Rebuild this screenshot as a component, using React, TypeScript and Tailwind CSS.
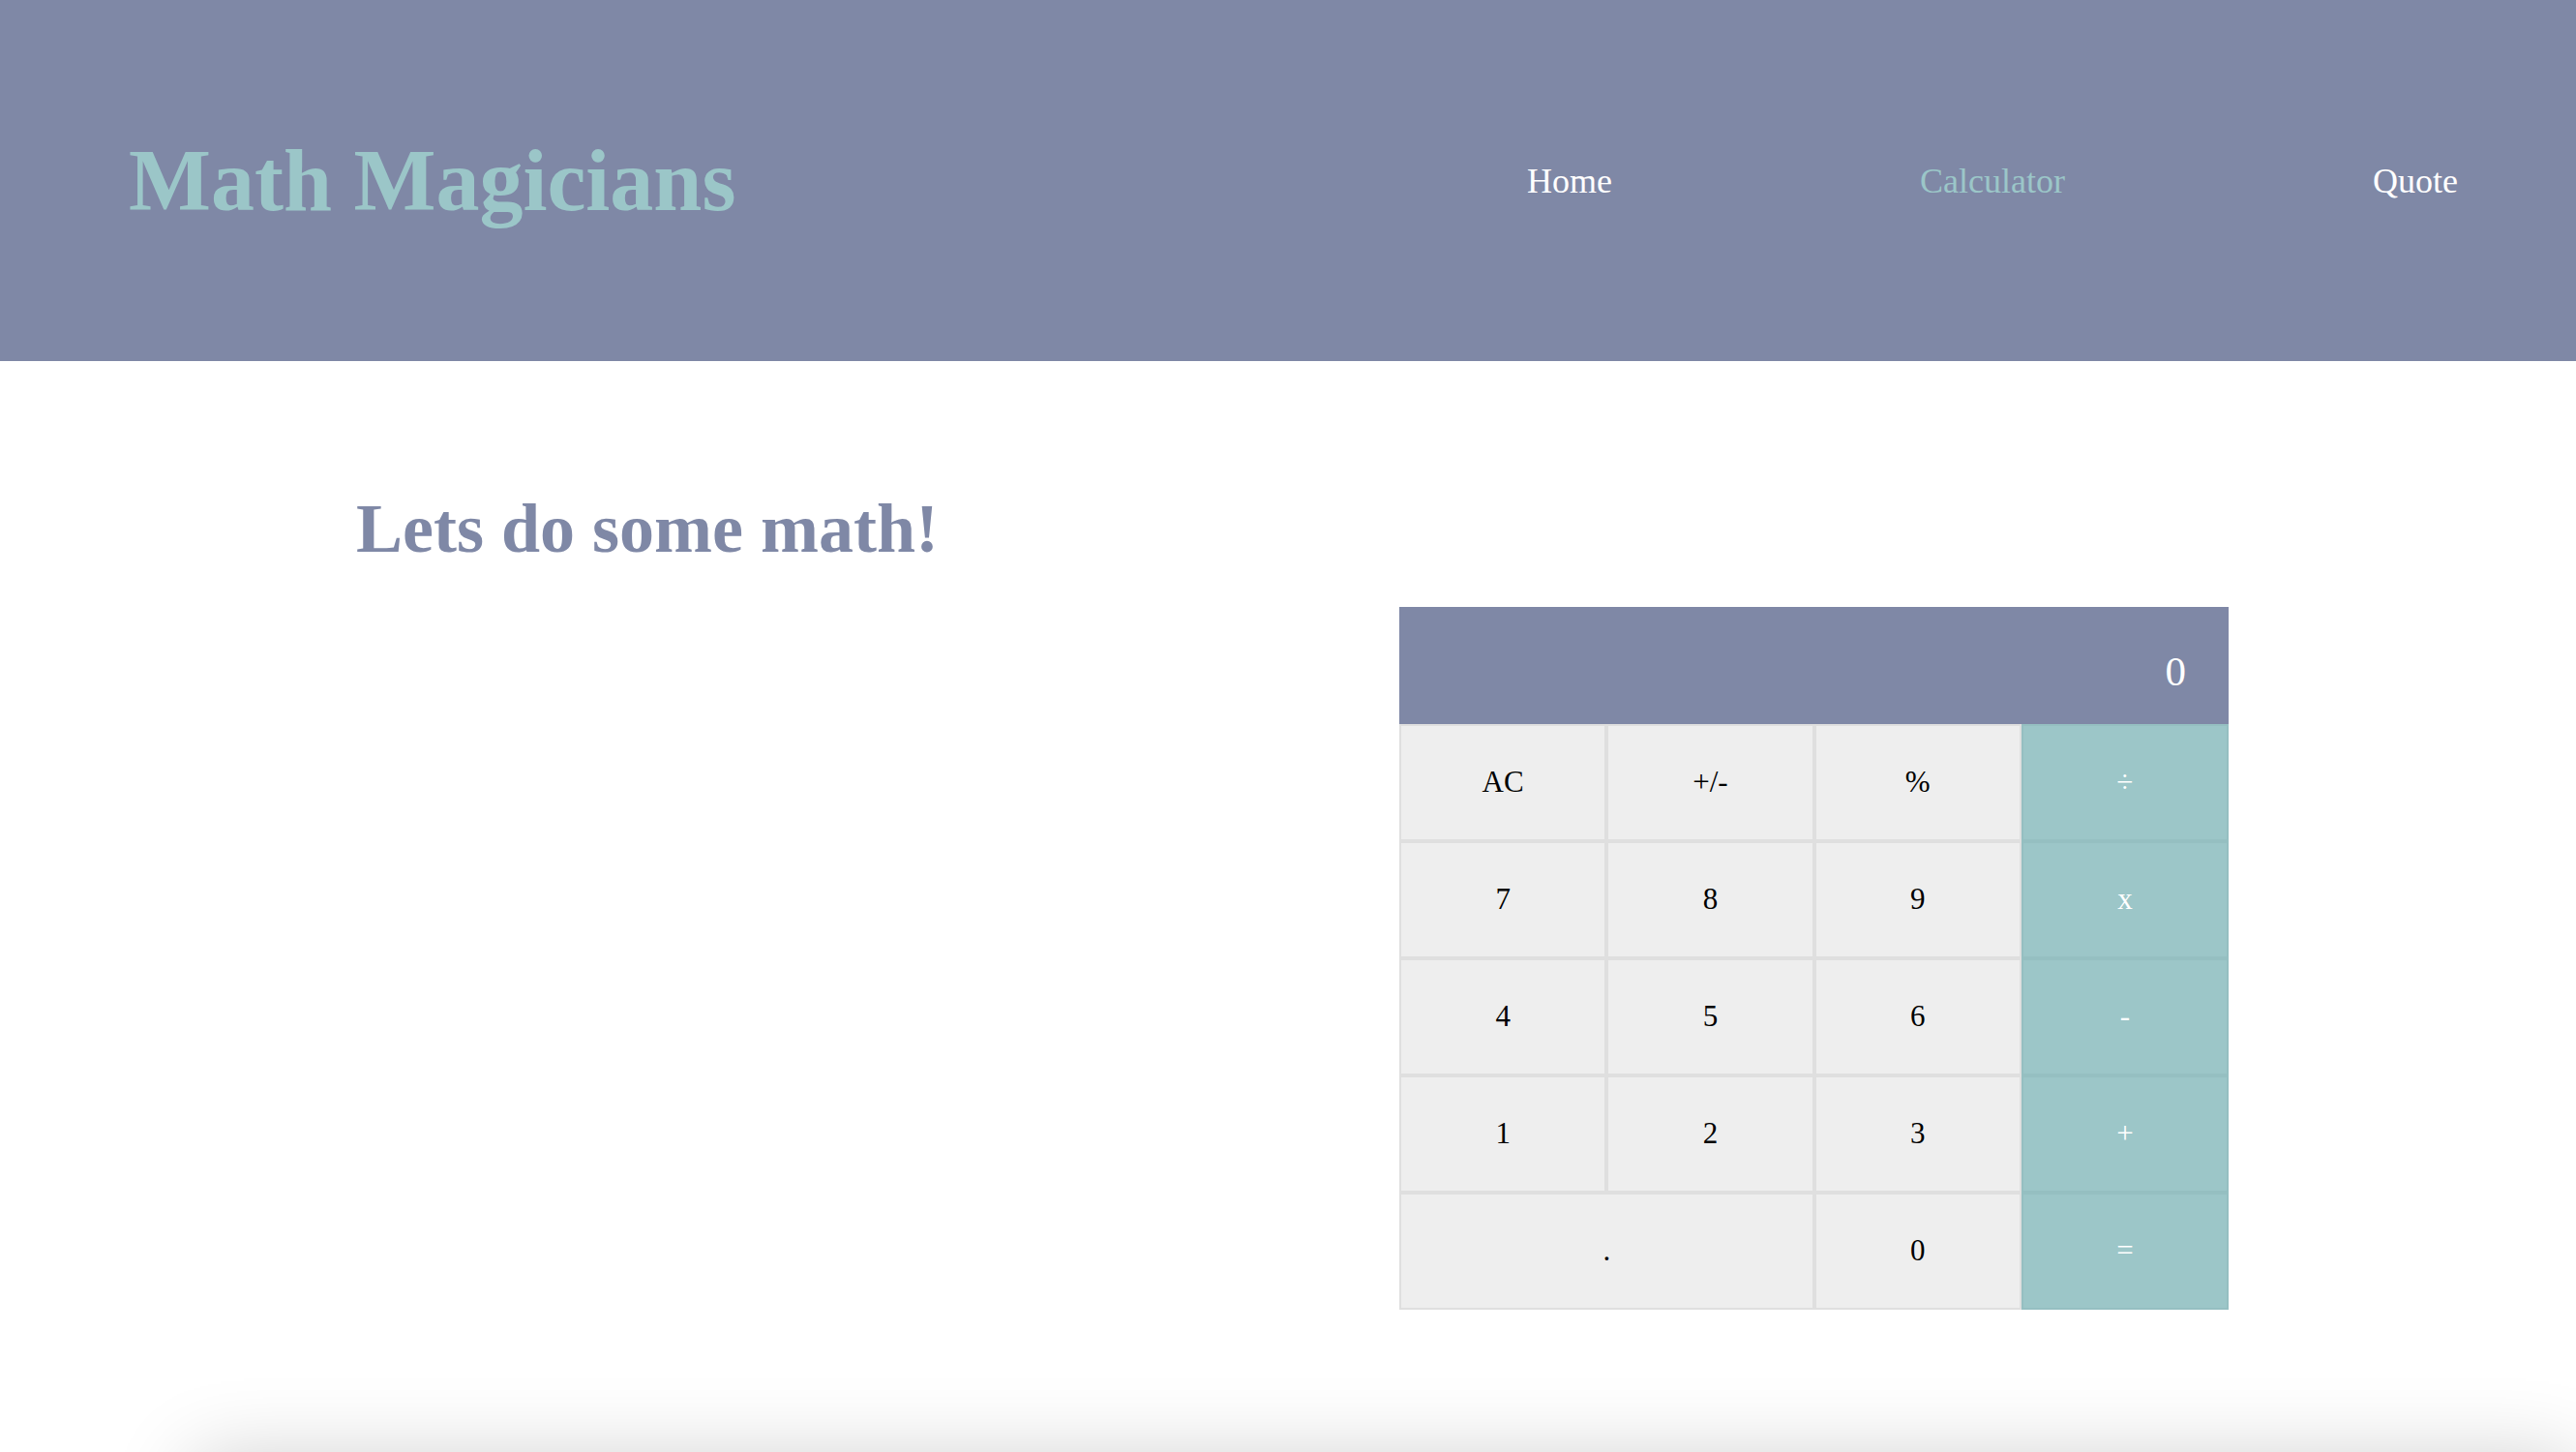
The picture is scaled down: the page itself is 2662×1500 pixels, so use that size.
import React from "react";

const keys: { label: string; op?: boolean; span?: boolean }[] = [
  { label: "AC" },
  { label: "+/-" },
  { label: "%" },
  { label: "÷", op: true },
  { label: "7" },
  { label: "8" },
  { label: "9" },
  { label: "x", op: true },
  { label: "4" },
  { label: "5" },
  { label: "6" },
  { label: "-", op: true },
  { label: "1" },
  { label: "2" },
  { label: "3" },
  { label: "+", op: true },
  { label: ".", span: true },
  { label: "0" },
  { label: "=", op: true },
];

export default function App() {
  return (
    <div className="h-[1500px] w-full overflow-hidden bg-white font-['Liberation_Serif',serif]">
      <header className="flex h-[373px] items-center justify-between bg-[#7f88a6] pl-[133px] pr-[122px]">
        <h1 className="m-0 text-[90px] font-bold text-[#9bc6c8]">Math Magicians</h1>
        <nav>
          <ul className="flex gap-[318px] text-[36px]">
            <li className="text-white">Home</li>
            <li className="text-[#9bc6c8]">Calculator</li>
            <li className="text-white">Quote</li>
          </ul>
        </nav>
      </header>
      <main className="flex flex-col">
        <h2 className="ml-[368px] mt-[133px] h-[80px] text-[72px] font-bold leading-[80px] text-[#7f88a6]">
          Lets do some math!
        </h2>
        <div className="ml-[1446px] mt-[41px] w-[857px]">
          <div className="flex h-[121px] items-center justify-end bg-[#7f88a6] pr-[44px] pt-[13px] text-[43px] text-white">
            0
          </div>
          <div className="grid grid-cols-4">
            {keys.map((k) => (
              <div
                key={k.label}
                className={
                  k.op
                    ? "flex h-[121px] items-center justify-center border-2 border-[#95bfc1] bg-[#9cc6c8] text-[31px] text-white"
                    : k.span
                    ? "col-span-2 flex h-[121px] items-center justify-center border-2 border-[#dfdfdf] bg-[#eeeeee] text-[31px] text-black"
                    : "flex h-[121px] items-center justify-center border-2 border-[#dfdfdf] bg-[#eeeeee] text-[31px] text-black"
                }
              >
                {k.label}
              </div>
            ))}
          </div>
        </div>
        <div className="ml-[200px] mt-[155px] h-[300px] w-[2462px] bg-white shadow-[0_0_80px_rgba(0,0,0,0.2)]" />
      </main>
    </div>
  );
}
